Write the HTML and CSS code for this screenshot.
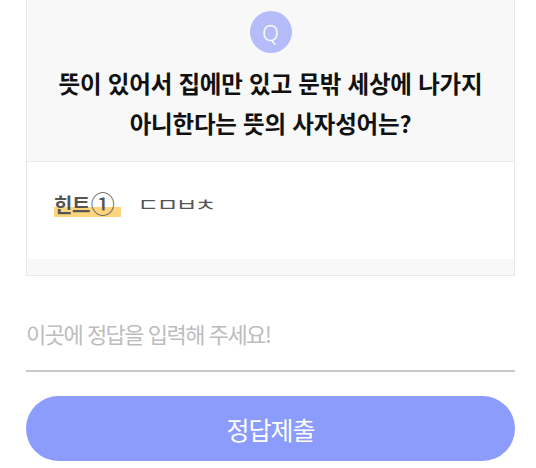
FILE: index.html
```html
<!DOCTYPE html>
<html lang="ko">
<head>
<meta charset="utf-8">
<link rel="stylesheet" href="styles.css">
</head>
<body>
<div class="page">
  <div class="card">
    <div class="question">
      <div class="q-badge">Q</div>
      <p class="q-text">뜻이 있어서 집에만 있고 문밖 세상에 나가지<br>아니한다는 뜻의 사자성어는?</p>
    </div>
    <div class="hint">
      <span class="hint-label">힌트<span class="hint-num">①</span></span>
      <span class="hint-value">ㄷㅁㅂㅊ</span>
    </div>
    <div class="card-foot"></div>
  </div>
  <div class="answer">
    <input class="answer-input" type="text" placeholder="이곳에 정답을 입력해 주세요!">
  </div>
  <button class="submit">정답제출</button>
</div>
</body>
</html>
```

FILE: styles.css
```css
html, body {
  margin: 0;
  padding: 0;
  background: #fff;
}
body {
  font-family: "Noto Sans CJK KR", "Noto Sans", sans-serif;
}
.page {
  width: 489px;
  padding-left: 26px;
}
.card {
  border: 1px solid #e8e8e8;
  border-top: none;
  display: flex;
  flex-direction: column;
}
.question {
  background: #f8f8f8;
  display: flex;
  flex-direction: column;
  align-items: center;
  padding: 11px 0 18px;
  border-bottom: 1px solid #ececec;
}
.q-badge {
  width: 42px;
  height: 42px;
  border-radius: 50%;
  background: #b4bdfa;
  color: #fff;
  font-family: "Noto Sans", sans-serif;
  font-weight: 300;
  font-size: 22px;
  line-height: 42px;
  text-align: center;
}
.q-text {
  margin: 10px 0 0;
  text-align: center;
  font-size: 23.5px;
  font-weight: 700;
  line-height: 40px;
  color: #111;
  letter-spacing: -0.2px;
}
.hint {
  background: #fff;
  height: 97px;
  box-sizing: border-box;
  display: flex;
  align-items: center;
  padding: 0 0 14px 27px;
  gap: 16px;
}
.hint-label {
  font-size: 20px;
  font-weight: 700;
  color: #555;
  line-height: 26px;
  background: linear-gradient(to bottom, transparent 62%, #fdd57e 62%, #fdd57e 96%, transparent 96%);
  padding-right: 7px;
  letter-spacing: -0.5px;
  border-radius: 2px;
}
.hint-num {
  font-size: 24px;
  font-weight: 500;
  margin-left: 1px;
}
.hint-value {
  display: inline-block;
  font-size: 24px;
  line-height: 26px;
  color: #555;
  letter-spacing: -3px;
  transform: scaleY(0.72);
}
.card-foot {
  height: 16px;
  background: #f8f8f8;
}
.answer {
  margin-top: 34px;
  border-bottom: 2px solid #c8c8c8;
}
.answer-input {
  width: 100%;
  box-sizing: border-box;
  border: none;
  outline: none;
  padding: 0 0 14px;
  height: 60px;
  font-family: inherit;
  font-size: 22px;
  letter-spacing: -1.5px;
  background: transparent;
  color: #333;
}
.answer-input::placeholder {
  color: #bdbdbd;
}
.submit {
  display: block;
  width: 100%;
  margin-top: 24px;
  height: 65px;
  border: none;
  border-radius: 33px;
  background: #8c9cfc;
  color: #fff;
  font-family: inherit;
  font-size: 25px;
  letter-spacing: -1px;
}
```
